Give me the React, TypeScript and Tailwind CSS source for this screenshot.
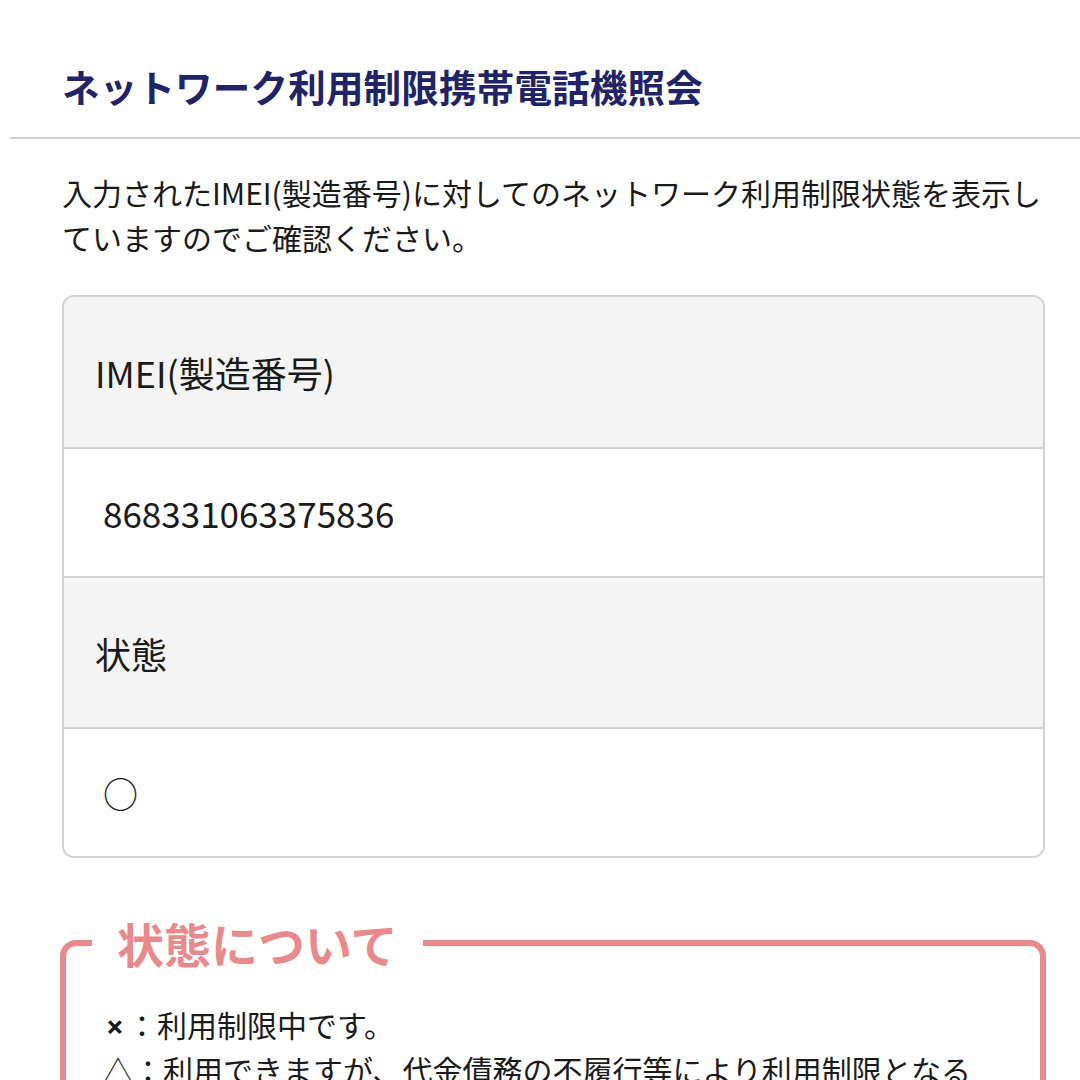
const font = "font-['Noto_Sans_CJK_JP','Noto_Sans',sans-serif]";

const Row = ({ label, head }: { label: string; head?: boolean }) => (
  <div
    className={
      head
        ? "flex h-[151px] items-center border-t-2 border-[#d2d2d2] bg-[#f4f4f4] pl-[31px] first:h-[150px] first:border-t-0"
        : "flex h-[129px] items-center border-t-2 border-[#d2d2d2] bg-white pl-[39px]"
    }
  >
    <span
      className={
        head
          ? "text-[36px] leading-none text-[#1a1a1a]"
          : "text-[35px] leading-none text-[#1a1a1a]"
      }
    >
      {label}
    </span>
  </div>
);

export default function App() {
  return (
    <div className={`${font} min-h-[1080px] w-[1080px] overflow-hidden bg-white`}>
      <header className="pb-[28px] pl-[62px] pt-[63px]">
        <h1 className="text-[37.5px] font-bold leading-[46px] tracking-[0.2px] text-[#1f2368]">
          ネットワーク利用制限携帯電話機照会
        </h1>
      </header>
      <div className="ml-[10px] border-b-2 border-[#d0d0d0]" />

      <div className="pl-[62px] pr-[30px]">
        <p className="mt-[31px] text-[30px] leading-[45px] text-[#1a1a1a]">
          入力されたIMEI(製造番号)に対してのネットワーク利用制限状態を表示していますのでご確認ください。
        </p>

        <div className="mt-[35px] w-[983px] overflow-hidden rounded-[12px] border-2 border-[#d2d2d2]">
          <Row label="IMEI(製造番号)" head />
          <Row label="868331063375836" />
          <Row label="状態" head />
          <Row label="○" />
        </div>

        <fieldset className="mt-[53px] w-[986px] -ml-[2px] rounded-[16px] border-[6px] border-[#e88a8b] px-[26px] pb-[40px]">
          <legend className="px-[25px] text-[47px] font-bold leading-[64px] text-[#e88a8b]">
            状態について
          </legend>
          <div className="mt-[28px] pl-[11px] pr-[30px] text-[30px] leading-[42px] text-[#1a1a1a]">
            <p>
              <span className="mx-[4px] font-['Roboto'] font-bold">×</span>：利用制限中です。
            </p>
            <p>△：利用できますが、代金債務の不履行等により利用制限となる可能性があります。</p>
          </div>
        </fieldset>
      </div>
    </div>
  );
}
